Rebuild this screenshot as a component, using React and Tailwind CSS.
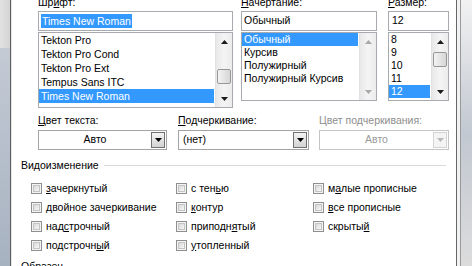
import React from "react";

const Tri = ({ up, color = "#000" }) => (
  <svg width="7" height="4" viewBox="0 0 7 4" className="block">
    {up ? <path d="M0 4 L3.5 0 L7 4 Z" fill={color} /> : <path d="M0 0 L7 0 L3.5 4 Z" fill={color} />}
  </svg>
);

function ScrollBar({ thumbTop, disabled }) {
  const c = disabled ? "#a8a8a8" : "#1a1a1a";
  return (
    <div className="w-[17px] h-full flex flex-col bg-gradient-to-r from-[#e8e8e8] via-[#f4f4f4] to-[#ececec] border-l border-[#e2e2e2]">
      <div className="h-[17px] flex items-center justify-center shrink-0">
        <Tri up color={c} />
      </div>
      <div className="flex-1 relative">
        {thumbTop !== undefined && (
          <div
            className="absolute left-[1px] right-[1px] h-[15px] rounded-[2px] border border-[#979797] bg-gradient-to-r from-[#f3f3f3] to-[#d6d6d6]"
            style={{ top: thumbTop }}
          />
        )}
      </div>
      <div className="h-[17px] flex items-center justify-center shrink-0">
        <Tri color={c} />
      </div>
    </div>
  );
}

function ListBox({ items, selected, rowH, height, thumbTop, disabledScroll, pl = "pl-[2px]" }) {
  return (
    <div className="border border-[#a7abb0] bg-white flex" style={{ height }}>
      <div className="flex-1 flex flex-col pr-[1px] overflow-hidden">
        {items.map((it) => (
          <div
            key={it}
            className={`${pl} whitespace-nowrap ${it === selected ? "bg-[#3399ff] text-white" : ""}`}
            style={{ height: rowH, lineHeight: rowH + "px" }}
          >
            {it}
          </div>
        ))}
      </div>
      <ScrollBar thumbTop={thumbTop} disabled={disabledScroll} />
    </div>
  );
}

function Label({ children, disabled }) {
  return (
    <div className={`h-[13px] leading-[13px] whitespace-nowrap ${disabled ? "text-[#8e8e8e]" : ""}`}>{children}</div>
  );
}

function Combo({ children, center, disabled }) {
  return (
    <div
      className={`h-[20px] border flex items-center bg-white pr-[1px] ${
        disabled ? "border-[#c4c4c4] text-[#9a9a9a]" : "border-[#a3a3a3]"
      }`}
    >
      <div className={`flex-1 whitespace-nowrap ${center ? "text-center" : "pl-[4px]"}`}>{children}</div>
      <div
        className={`w-[14px] h-[16px] flex items-center justify-center border ${
          disabled
            ? "border-[#d4d4d4] bg-[#f4f4f4]"
            : "border-[#707070] bg-gradient-to-b from-[#f4f4f4] to-[#d2d2d2]"
        }`}
      >
        <Tri color={disabled ? "#b8b8b8" : "#000"} />
      </div>
    </div>
  );
}

function Check({ children }) {
  return (
    <div className="h-[19px] flex items-center gap-[4px] whitespace-nowrap">
      <div className="w-[11px] h-[11px] border border-[#8e8f8f] bg-[#f4f4f4] p-[1px]">
        <div className="w-full h-full border border-[#c4c4c4] bg-gradient-to-br from-[#d9d9d9] to-[#f7f7f7]" />
      </div>
      <span>{children}</span>
    </div>
  );
}

const U = ({ children }) => <span className="underline underline-offset-[1px]">{children}</span>;

function Group({ title }) {
  return (
    <div className="flex items-center h-[13px] leading-[13px] pl-[9px] pr-[10px]">
      <span className="whitespace-nowrap">{title}</span>
      <div className="flex-1 h-[1px] bg-[#dadada] ml-[5px]" />
    </div>
  );
}

export default function App() {
  return (
    <div className="w-[472px] h-[266px] overflow-hidden flex font-['Liberation_Sans',Arial,sans-serif] text-[10.5px] text-black">
      <div className="w-[10px] h-full flex flex-col">
        <div className="h-[48px] bg-gradient-to-r from-[#e2e2e2] to-[#d4d4d4]" />
        <div className="flex-1 bg-gradient-to-b from-[#c3cad4] to-[#a7b2c1]" />
      </div>
      <div className="w-[1px] h-full bg-[#5f5f5f]" />
      <div className="w-[1px] h-full bg-[#e4e4e4]" />
      <div className="w-[444px] h-full bg-white flex flex-col">
        <div className="flex pl-[26px] mt-[-4px] items-start">
          <div className="w-[195px] flex flex-col">
            <Label>
              Шр<U>и</U>фт:
            </Label>
            <div className="mt-[2px] h-[20px] border border-[#a7abb0] flex items-center pl-[2px]">
              <span className="bg-[#3399ff] text-white px-[1px] leading-[14px]">Times New Roman</span>
            </div>
            <div className="mt-[1px]">
              <ListBox
                items={["Tekton Pro", "Tekton Pro Cond", "Tekton Pro Ext", "Tempus Sans ITC", "Times New Roman"]}
                selected="Times New Roman"
                rowH={14}
                height={76}
                thumbTop={19}
              />
            </div>
          </div>
          <div className="w-[136px] ml-[8px] flex flex-col">
            <Label>
              <U>Н</U>ачертание:
            </Label>
            <div className="mt-[2px] h-[20px] border border-[#a7abb0] flex items-center pl-[2px]">Обычный</div>
            <div className="mt-[1px]">
              <ListBox
                items={["Обычный", "Курсив", "Полужирный", "Полужирный Курсив"]}
                selected="Обычный"
                rowH={13}
                height={69}
                disabledScroll
              />
            </div>
          </div>
          <div className="w-[61px] ml-[11px] flex flex-col">
            <Label>
              <U>Р</U>азмер:
            </Label>
            <div className="mt-[2px] h-[20px] border border-[#a7abb0] flex items-center pl-[3px]">12</div>
            <div className="mt-[1px]">
              <ListBox items={["8", "9", "10", "11", "12"]} selected="12" rowH={13} height={69} thumbTop={2} />
            </div>
          </div>
        </div>

        <div className="flex pl-[26px] mt-[6px]">
          <div className="w-[129px] flex flex-col">
            <Label>
              <U>Ц</U>вет текста:
            </Label>
            <div className="mt-[3px]">
              <Combo center>Авто</Combo>
            </div>
          </div>
          <div className="w-[131px] ml-[11px] flex flex-col">
            <Label>
              <U>П</U>одчеркивание:
            </Label>
            <div className="mt-[3px]">
              <Combo>(нет)</Combo>
            </div>
          </div>
          <div className="w-[130px] ml-[10px] flex flex-col">
            <Label disabled>Цвет подчеркивания:</Label>
            <div className="mt-[3px]">
              <Combo center disabled>
                Авто
              </Combo>
            </div>
          </div>
        </div>

        <div className="mt-[9px]">
          <Group title="Видоизменение" />
        </div>

        <div className="mt-[7px] pl-[19px] grid grid-cols-[145px_137px_1fr]">
          <Check>
            <U>з</U>ачеркнутый
          </Check>
          <Check>
            с тен<U>ь</U>ю
          </Check>
          <Check>
            м<U>а</U>лые прописные
          </Check>
          <Check>
            <U>д</U>войное зачеркивание
          </Check>
          <Check>
            <U>к</U>онтур
          </Check>
          <Check>
            <U>в</U>се прописные
          </Check>
          <Check>
            над<U>с</U>трочный
          </Check>
          <Check>
            приподн<U>я</U>тый
          </Check>
          <Check>
            скрыты<U>й</U>
          </Check>
          <Check>
            подстрочн<U>ы</U>й
          </Check>
          <Check>
            <U>у</U>топленный
          </Check>
          <div />
        </div>

        <div className="mt-[5px]">
          <Group title="Образец" />
        </div>
      </div>
      <div className="w-[1px] h-full bg-[#666]" />
      <div className="w-[3px] h-full bg-[#f2f2f2]" />
      <div className="w-[1px] h-full bg-[#9a9a9a]" />
      <div className="flex-1 h-full bg-gradient-to-b from-[#f2f2f2] via-[#c2c8d1] to-[#dcdcdc]" />
    </div>
  );
}
